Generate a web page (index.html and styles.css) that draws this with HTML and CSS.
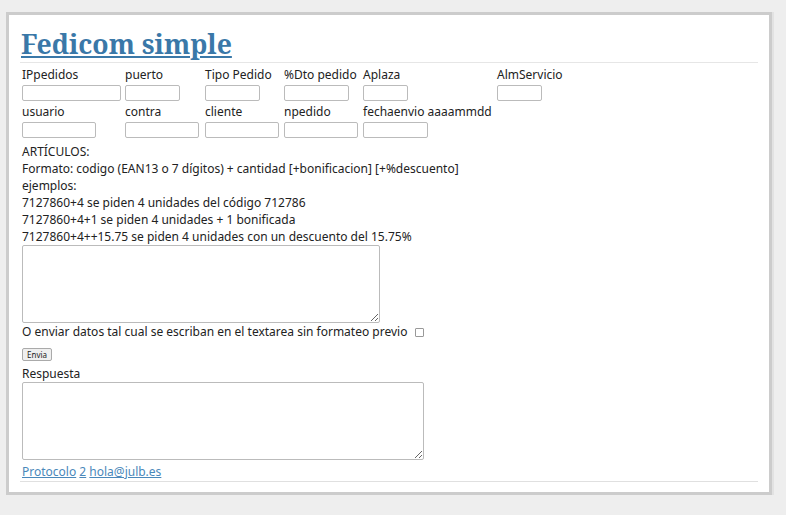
FILE: index.html
```html
<!DOCTYPE html>
<html lang="es">
<head>
  <meta charset="UTF-8">
  <meta name="viewport" content="width=device-width, initial-scale=1.0">
  <title>Fedicom simple</title>
  <link rel="stylesheet" href="styles.css">
</head>
<body>
<div class="page">
  <h1 class="title"><a href="#">Fedicom simple</a></h1>

  <form class="pedido">
    <div class="campos">
      <label class="campo">IPpedidos<input type="text" class="w99"></label>
      <label class="campo">puerto<input type="text" class="w55"></label>
      <label class="campo">Tipo Pedido<input type="text" class="w55"></label>
      <label class="campo">%Dto pedido<input type="text" class="w65"></label>
      <label class="campo">Aplaza<input type="text" class="w45"></label>
      <label class="campo">AlmServicio<input type="text" class="w45"></label>

      <label class="campo">usuario<input type="text" class="w74"></label>
      <label class="campo">contra<input type="password" class="w74"></label>
      <label class="campo">cliente<input type="text" class="w74"></label>
      <label class="campo">npedido<input type="text" class="w74"></label>
      <label class="campo">fechaenvio aaaammdd<input type="text" class="w65"></label>
    </div>

    <div class="ayuda">
      ARTÍCULOS:<br>
      Formato: codigo (EAN13 o 7 dígitos) + cantidad [+bonificacion] [+%descuento]<br>
      ejemplos:<br>
      7127860+4 se piden 4 unidades del código 712786<br>
      7127860+4+1 se piden 4 unidades + 1 bonificada<br>
      7127860+4++15.75 se piden 4 unidades con un descuento del 15.75%
    </div>
    <textarea class="articulos"></textarea>

    <label class="raw">O enviar datos tal cual se escriban en el textarea sin formateo previo <input type="checkbox"></label>

    <button type="button" class="enviar">Envia</button>

    <div class="etiqueta">Respuesta</div>
    <textarea class="respuesta"></textarea>
  </form>

  <div class="pie">
    <a href="#">Protocolo</a> <a href="#">2</a> <a href="#">hola@julb.es</a>
  </div>
</div>
</body>
</html>
```

FILE: styles.css
```css
body {
  margin: 0;
  padding: 12px 14px 19px 6px;
  background-color: #eee;
  font-family: "Noto Sans", "Open Sans", sans-serif;
  font-size: 12px;
  line-height: 17px;
  color: #222;
}
.page {
  background-color: white;
  border: 3px solid #ccc;
  box-shadow: 2px 0 0 #e2e2e2;
  padding: 11px 11px 10px;
}
.title {
  margin: 0;
  font-family: "Noto Serif", "DejaVu Serif", serif;
  font-size: 26.6px;
  line-height: 36px;
  font-weight: bold;
  border-bottom: 1px solid #e6e6e6;
}
.title a {
  color: #3a78a8;
  padding-left: 1px;
}
.campos {
  display: grid;
  grid-template-columns: 103px 80px 79px 79px 134px auto;
  row-gap: 2px;
  padding: 3px 0 0 2px;
}
.campo {
  display: block;
  white-space: nowrap;
}
.campo input {
  display: block;
  box-sizing: border-box;
  height: 16px;
  margin-top: 2px;
  padding: 0 2px;
  border: 1px solid #bbb;
  border-radius: 2px;
  font-size: 11px;
}
.w99 { width: 99px; }
.w74 { width: 74px; }
.w65 { width: 65px; }
.w55 { width: 55px; }
.w45 { width: 45px; }
.ayuda {
  margin-top: 5px;
  padding-left: 2px;
}
textarea {
  display: block;
  box-sizing: border-box;
  margin-left: 2px;
  border: 1px solid #bbb;
  border-radius: 2px;
  height: 78px;
}
.articulos {
  width: 358px;
}
.respuesta {
  width: 402px;
}
.raw {
  display: block;
  padding-left: 2px;
}
.raw input {
  appearance: none;
  width: 9px;
  height: 9px;
  margin: 0 0 0 4px;
  border: 1px solid #999;
  border-radius: 1px;
  vertical-align: -1px;
}
.enviar {
  display: block;
  margin: 8px 0 4px 2px;
  padding: 1px 4px;
  font-family: "Noto Sans", sans-serif;
  font-size: 8px;
  line-height: 9px;
  color: #222;
  background-color: #efefef;
  border: 1px solid #aaa;
  border-radius: 2px;
}
.etiqueta {
  padding-left: 2px;
}
.pie {
  margin-top: 3px;
  padding: 0 0 1px 2px;
  border-bottom: 1px solid #e0e0e0;
}
.pie a {
  color: #4a88ba;
}
```
